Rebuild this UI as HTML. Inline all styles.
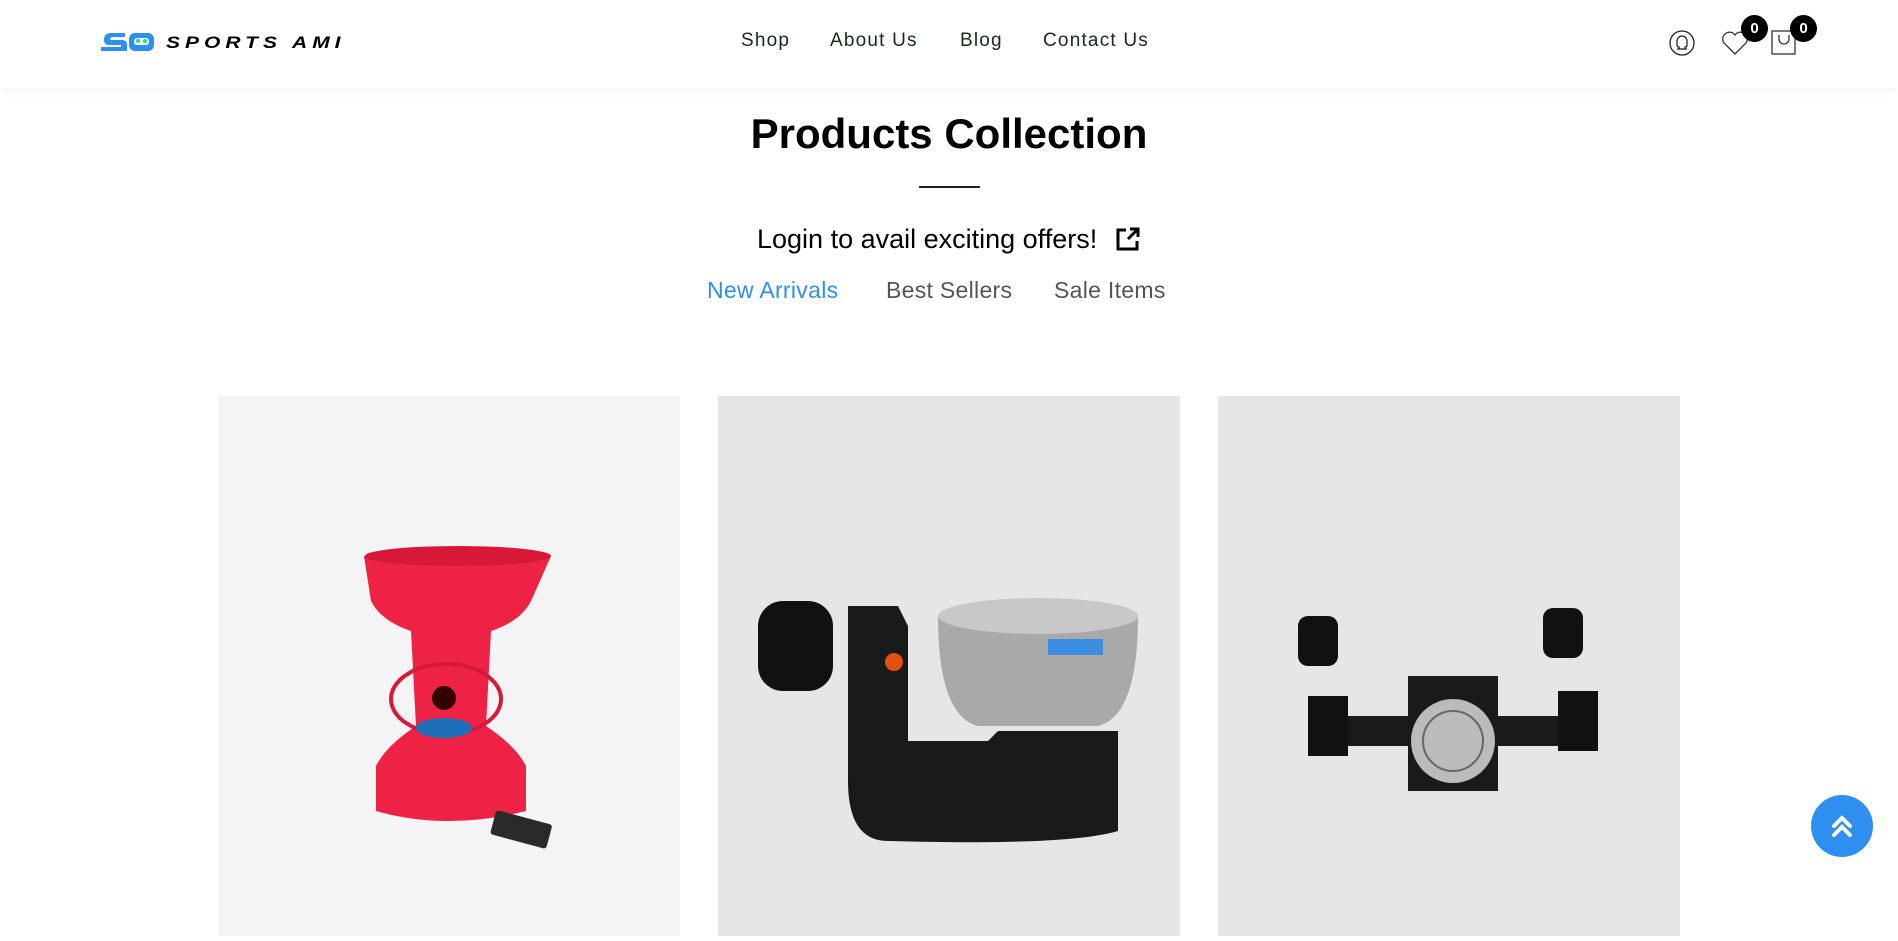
<!DOCTYPE html>
<html><head><meta charset="utf-8">
<style>
*{margin:0;padding:0;box-sizing:border-box}
body{width:1898px;height:932px;overflow:hidden;background:#fff;font-family:"Liberation Sans",sans-serif;position:relative}
.hdr{position:absolute;left:0;top:0;width:1898px;height:88px;background:#fff;box-shadow:0 2px 10px rgba(0,0,0,.06)}
.nav a{position:absolute;top:30px;font-size:19px;letter-spacing:1.2px;color:#1a2a1a;text-decoration:none}
.badge{position:absolute;width:27px;height:27px;border-radius:50%;background:#000;color:#fff;font-size:15px;font-weight:bold;text-align:center;line-height:27px}
h1{position:absolute;left:0;width:1898px;top:110px;text-align:center;font-size:42px;font-weight:bold;color:#000}
.line{position:absolute;left:919px;top:186px;width:61px;height:2px;background:#222}
.login{position:absolute;left:757px;top:224px;font-size:27px;color:#000}
.tab{position:absolute;top:277px;font-size:23px;color:#555;letter-spacing:.3px}
.card{position:absolute;top:396px;width:462px;height:540px}
.up{position:absolute;left:1811px;top:795px;width:62px;height:62px;border-radius:50%;background:#2e8ff0}
</style></head><body>
<div class="hdr">
 <svg style="position:absolute;left:101px;top:31px" width="60" height="22" viewBox="0 0 60 22"><path d="M10 2h14v4H12q-3 0-3 3v0h12q5 0 5 5v6H0v-4h20v-2H8q-5 0-5-5q0-7 7-7z" fill="#2e8ff0"/><rect x="28" y="2" width="25" height="18" rx="6" fill="#2e8ff0"/><rect x="33" y="7" width="15" height="7" rx="3" fill="#fff"/><circle cx="37" cy="10" r="2.2" fill="#2ee08a"/><circle cx="44" cy="10" r="2.2" fill="#2ee08a"/></svg>
 <div style="position:absolute;left:166px;top:31px;font-size:21px;font-style:italic;letter-spacing:5px;color:#000;font-weight:bold;transform:scaleY(.8)">SPORTS AMI</div>
 <div class="nav"><a style="left:741px">Shop</a><a style="left:830px">About Us</a><a style="left:960px">Blog</a><a style="left:1043px">Contact Us</a></div>
 <svg style="position:absolute;left:1669px;top:30px" width="26" height="26" viewBox="0 0 26 26" fill="none" stroke="#222" stroke-width="1.3"><circle cx="13" cy="13" r="12"/><path d="M8 19h10M10 19v-2q-2 0-2-2v-4a5 5 0 0110 0v4q0 2-2 2v2"/></svg>
 <svg style="position:absolute;left:1721px;top:30px" width="28" height="26" viewBox="0 0 28 26" fill="none" stroke="#333" stroke-width="1.3"><path d="M14 24L3 13A6 6 0 0114 5a6 6 0 0111 8z"/></svg>
 <div class="badge" style="left:1741px;top:15px">0</div>
 <svg style="position:absolute;left:1771px;top:30px" width="26" height="26" viewBox="0 0 26 26" fill="none" stroke="#333" stroke-width="1.3"><rect x="1" y="1" width="23" height="23"/><path d="M8 5v4a5 5 0 0010 0V5"/></svg>
 <div class="badge" style="left:1790px;top:15px">0</div>
</div>
<h1>Products Collection</h1>
<div class="line"></div>
<div class="login">Login to avail exciting offers!</div>
<svg style="position:absolute;left:1115px;top:226px" width="26" height="26" viewBox="0 0 26 26" fill="none" stroke="#000" stroke-width="3"><path d="M11 4H3v19h19v-8M13 13L23 3M15 3h8v8"/></svg>
<div class="tab" style="left:707px;color:#2e8ff0">New Arrivals</div>
<div class="tab" style="left:886px">Best Sellers</div>
<div class="tab" style="left:1054px">Sale Items</div>

<div class="card" style="left:218px;background:#f4f4f4">
<svg width="462" height="540">
 <path d="M146 160q93-10 187 0l-20 45q-10 20-40 30l-5 95q30 20 40 40v45q-80 20-150 0v-45q10-20 40-40l-5-95q-30-10-40-30z" fill="#ee2244"/>
 <ellipse cx="240" cy="160" rx="93" ry="10" fill="#d81838"/>
 <ellipse cx="228" cy="303" rx="55" ry="35" fill="none" stroke="#d81838" stroke-width="4"/>
 <circle cx="226" cy="302" r="12" fill="#300"/>
 <ellipse cx="226" cy="332" rx="28" ry="10" fill="#1e6fb8"/>
 <rect x="275" y="420" width="58" height="25" rx="3" fill="#2a2a2a" transform="rotate(15 300 430)"/>
</svg></div>

<div class="card" style="left:718px;background:#e6e6e6">
<svg width="462" height="540">
 <path d="M220 220h200q0 100-40 110h-120q-40-10-40-110z" fill="#a9a9a9"/>
 <ellipse cx="320" cy="220" rx="100" ry="18" fill="#c8c8c8"/>
 <path d="M130 210h50l10 20v115h80l10-10h120v100q-50 15-230 10q-40 0-40-60z" fill="#1a1a1a"/>
 <rect x="40" y="205" width="75" height="90" rx="25" fill="#111"/>
 <rect x="330" y="243" width="55" height="16" fill="#3b8de0"/>
 <circle cx="176" cy="266" r="9" fill="#e05010"/>
</svg></div>

<div class="card" style="left:1218px;background:#e6e6e6">
<svg width="462" height="540">
 <rect x="80" y="220" width="40" height="50" rx="10" fill="#111"/>
 <rect x="325" y="212" width="40" height="50" rx="10" fill="#111"/>
 <rect x="90" y="300" width="40" height="60" fill="#111"/>
 <rect x="340" y="295" width="40" height="60" fill="#111"/>
 <path d="M130 320h60v-40h90v40h60v30h-60v45h-90v-45h-60z" fill="#1a1a1a"/>
 <circle cx="235" cy="345" r="42" fill="#bbb"/>
 <circle cx="235" cy="345" r="30" fill="none" stroke="#666" stroke-width="2"/>
</svg></div>

<div class="up"><svg width="62" height="62" viewBox="0 0 62 62" fill="none" stroke="#fff" stroke-width="4" stroke-linecap="round"><path d="M23 31l8-8 8 8M23 40l8-8 8 8"/></svg></div>
</body></html>
